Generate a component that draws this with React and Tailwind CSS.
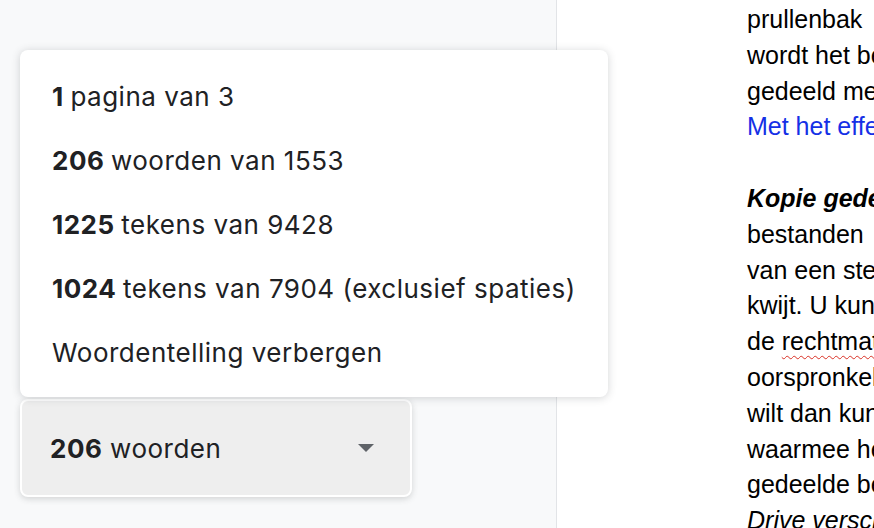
const ITEMS = [
    { n: '1', rest: 'pagina van 3' },
    { n: '206', rest: 'woorden van 1553' },
    { n: '1225', rest: 'tekens van 9428' },
    { n: '1024', rest: 'tekens van 7904 (exclusief spaties)' },
    { n: null, rest: 'Woordentelling verbergen' },
];

function CaretDown() {
    return (
        <svg width="16" height="8" viewBox="0 0 16 8" className="shrink-0">
            <path d="M0 0h16L8 8z" fill="#5f6368" />
        </svg>
    );
}

function WordCountMenu() {
    return (
        <div className="relative z-10 w-[588px] rounded-lg bg-white pt-[15px] pb-[12px] pl-[32px] shadow-[0_1px_8px_rgba(60,64,67,0.22)]">
            {ITEMS.map(it => (
                <div key={it.rest} className="h-[64px] leading-[64px] whitespace-nowrap">
                    {it.n && <span className="font-bold">{it.n} </span>}
                    {it.rest}
                </div>
            ))}
        </div>
    );
}

function DocText() {
    return (
        <div className="min-w-0 flex-1 overflow-hidden bg-white pt-[2px] pl-[190px] font-['Liberation_Sans',Arial,sans-serif] text-[25px] leading-[35.8px] whitespace-nowrap text-black">
            <p>prullenbak</p>
            <p>wordt het be</p>
            <p>gedeeld met</p>
            <p className="text-[#1530e6]">Met het effect</p>
            <p>&nbsp;</p>
            <p className="font-bold italic">Kopie gede</p>
            <p>bestanden</p>
            <p>van een ster</p>
            <p>kwijt. U kunt</p>
            <p>de <span className="underline decoration-wavy decoration-[#d93025] decoration-1 underline-offset-[5px]">rechtmat</span></p>
            <p>oorspronkel</p>
            <p>wilt dan kunt</p>
            <p>waarmee he</p>
            <p>gedeelde be</p>
            <p className="italic">Drive versch</p>
        </div>
    );
}

export default function App() {
    return (
        <div className="flex h-[528px] w-[874px] overflow-hidden">
            <div className="w-[557px] shrink-0 border-r border-[#e2e4e7] bg-[#f8f9fa] pt-[50px] pl-5 font-['Inter',sans-serif] text-[26px] tracking-[0.5px] text-[#202124]">
                <WordCountMenu />
                <div className="mt-[2px] flex h-[98px] w-[392px] items-center justify-between rounded-lg border-2 border-white bg-[#eeeeee] pr-[36px] pl-[28px] shadow-[0_2px_6px_rgba(60,64,67,0.2)]">
                    <span className="whitespace-nowrap"><span className="font-bold">206</span> woorden</span>
                    <CaretDown />
                </div>
            </div>
            <DocText />
        </div>
    );
}
